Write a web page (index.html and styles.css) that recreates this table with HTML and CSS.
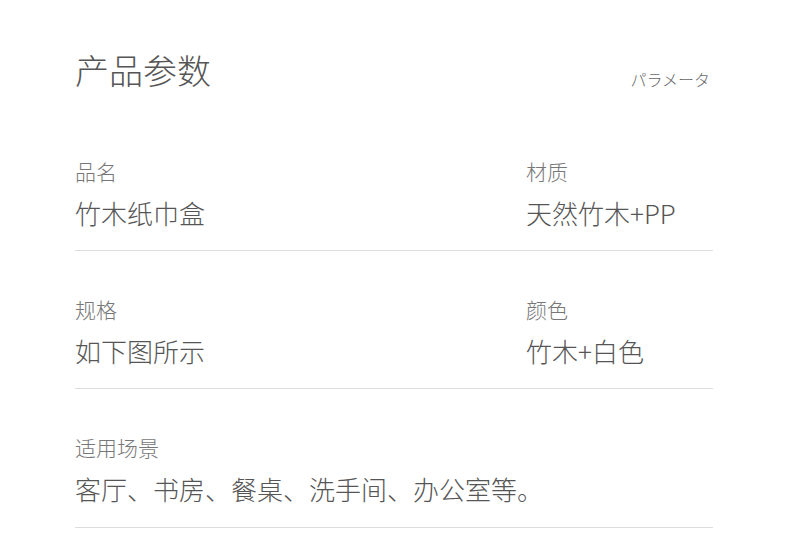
FILE: index.html
```html
<!DOCTYPE html>
<html lang="zh-CN">
<head>
    <meta charset="UTF-8">
    <title>产品参数</title>
    <link rel="stylesheet" href="styles.css">
</head>
<body>
    <div class="params">
        <div class="params-head">
            <h1>产品参数</h1>
            <span class="sub">パラメータ</span>
        </div>

        <div class="row">
            <div class="cell">
                <div class="label">品名</div>
                <div class="value">竹木纸巾盒</div>
            </div>
            <div class="cell">
                <div class="label">材质</div>
                <div class="value">天然竹木+PP</div>
            </div>
        </div>

        <div class="row">
            <div class="cell">
                <div class="label">规格</div>
                <div class="value">如下图所示</div>
            </div>
            <div class="cell">
                <div class="label">颜色</div>
                <div class="value">竹木+白色</div>
            </div>
        </div>

        <div class="row single">
            <div class="cell">
                <div class="label">适用场景</div>
                <div class="value">客厅、书房、餐桌、洗手间、办公室等。</div>
            </div>
        </div>
    </div>
</body>
</html>
```

FILE: styles.css
```css
body {
    margin: 0;
    background: #fff;
    font-family: "Noto Sans CJK SC", "Noto Sans", sans-serif;
    font-weight: 300;
}
.params {
    width: 638px;
    padding: 53px 0 0 75px;
}
.params-head {
    display: flex;
    justify-content: space-between;
    align-items: flex-end;
    padding-right: 3px;
    margin-bottom: 74px;
}
.params-head h1 {
    margin: 0;
    font-size: 34px;
    line-height: 34px;
    font-weight: 300;
    color: #555;
}
.sub {
    font-size: 16px;
    line-height: 16px;
    color: #666;
}
.row {
    display: grid;
    grid-template-columns: 451px 1fr;
    border-bottom: 1px solid #ddd;
    padding-bottom: 24px;
    margin-bottom: 48px;
}
.row.single {
    grid-template-columns: 1fr;
    padding-bottom: 25px;
}
.label {
    font-size: 21px;
    line-height: 21px;
    color: #777;
    margin-bottom: 18px;
}
.value {
    font-size: 26px;
    line-height: 26px;
    color: #555;
}
```
